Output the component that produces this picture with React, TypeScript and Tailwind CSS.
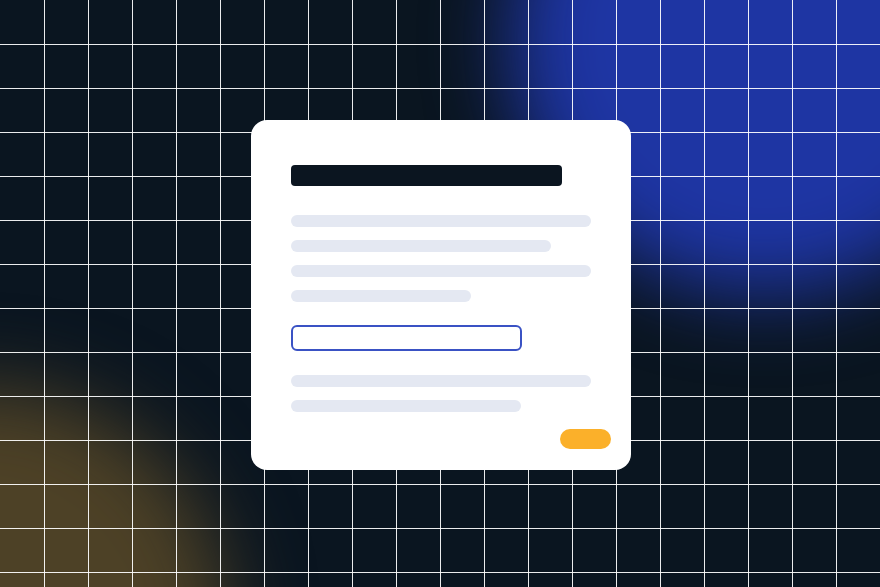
import React from 'react';

const COLS = Array.from({ length: 19 }, (_, i) => (i + 1) * 44);
const ROWS = Array.from({ length: 13 }, (_, i) => (i + 1) * 44);

function GridLines() {
  return (
    <svg className="absolute inset-0 h-full w-full" width="880" height="587">
      {COLS.map((x) => (
        <line key={`v${x}`} x1={x + 0.5} y1={0} x2={x + 0.5} y2={587} stroke="rgba(255,255,255,0.92)" strokeWidth={1} />
      ))}
      {ROWS.map((y) => (
        <line key={`h${y}`} x1={0} y1={y + 0.5} x2={880} y2={y + 0.5} stroke="rgba(255,255,255,0.92)" strokeWidth={1} />
      ))}
    </svg>
  );
}

function Bar({ width }: { width: string }) {
  return <div className={`h-3 rounded-full bg-[#e4e8f2] ${width}`} />;
}

export default function App() {
  return (
    <div className="relative h-[587px] w-[880px] overflow-hidden bg-[#0a1520]">
      {/* glows */}
      <div className="absolute left-[510px] top-[-215px] h-[510px] w-[510px] rounded-full bg-[#1e35a3] blur-[40px]" />
      <div className="absolute left-[-270px] top-[385px] h-[500px] w-[500px] rounded-full bg-[#4d4126] blur-[40px]" />

      <GridLines />

      {/* card */}
      <div className="relative flex justify-center pt-[120px]">
        <div className="ml-[1px] flex h-[350px] w-[380px] flex-col rounded-2xl bg-white pl-10 pr-5 pt-[45px]">
          <div className="h-[21px] w-[271px] rounded bg-[#0b1520]" />

          <div className="mt-[29px] flex flex-col gap-[13px]">
            <Bar width="w-[300px]" />
            <Bar width="w-[260px]" />
            <Bar width="w-[300px]" />
            <Bar width="w-[180px]" />
          </div>

          <div className="mt-[23px] h-[26px] w-[231px] rounded-md border-2 border-[#3a52c4]" />

          <div className="mt-6 flex flex-col gap-[13px]">
            <Bar width="w-[300px]" />
            <Bar width="w-[230px]" />
          </div>

          <div className="mt-[17px] flex justify-end">
            <div className="h-5 w-[51px] rounded-full bg-[#fbb02a]" />
          </div>
        </div>
      </div>
    </div>
  );
}
